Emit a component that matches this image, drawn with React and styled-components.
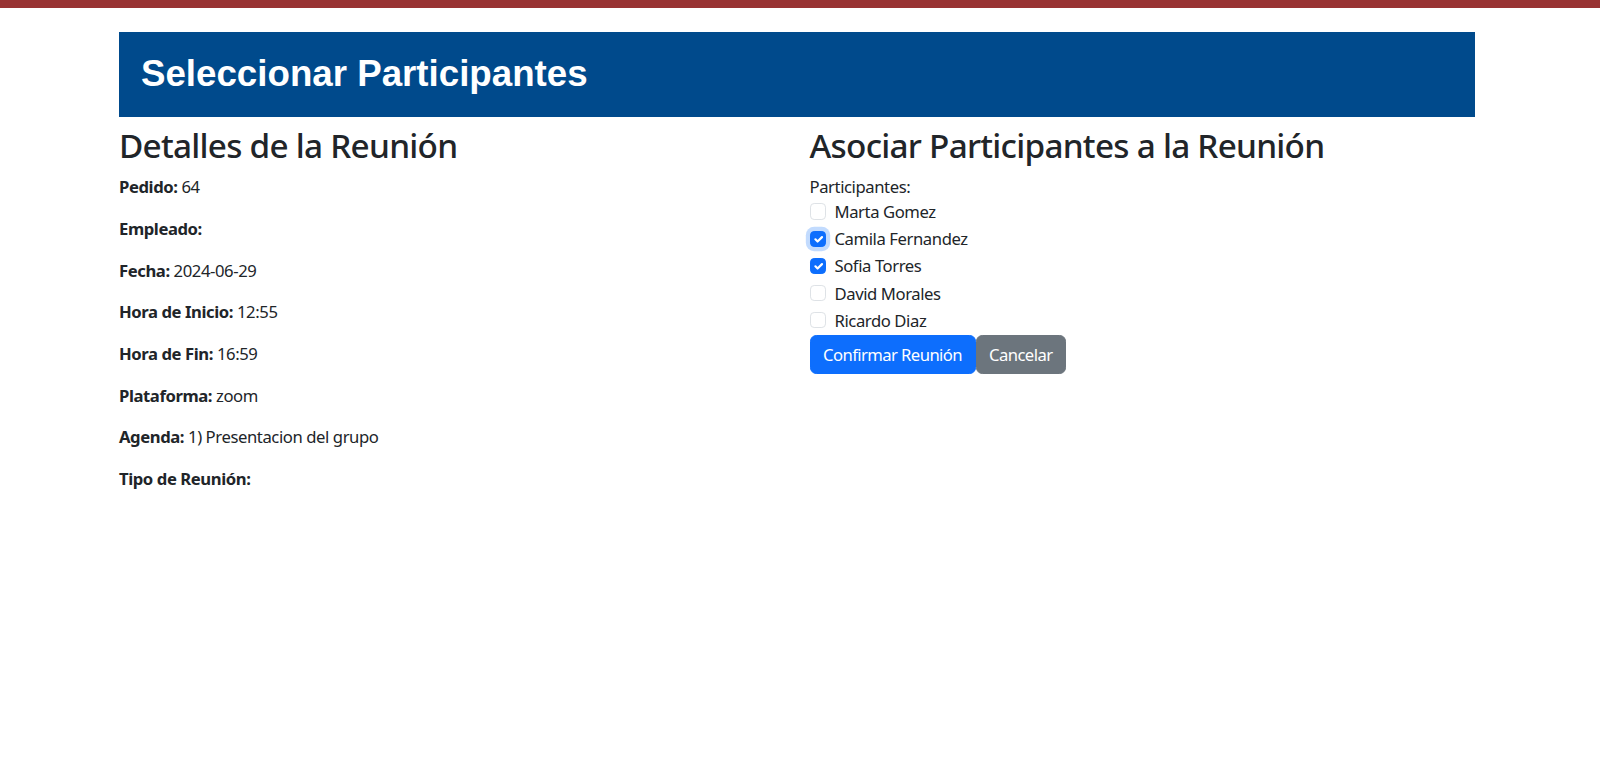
import React, { useState } from 'react'
import styled, { createGlobalStyle } from 'styled-components'

const GlobalStyle = createGlobalStyle`
  body {
    margin: 0;
    font-family: "Noto Sans", "Open Sans", sans-serif;
    font-size: 16.67px;
    line-height: 1.5;
    letter-spacing: -0.025em;
    color: #212529;
    background: #fff;
  }
  * {
    box-sizing: border-box;
  }
`

const detalles = [
  ['Pedido:', '64'],
  ['Empleado:', ''],
  ['Fecha:', '2024-06-29'],
  ['Hora de Inicio:', '12:55'],
  ['Hora de Fin:', '16:59'],
  ['Plataforma:', 'zoom'],
  ['Agenda:', '1) Presentacion del grupo'],
  ['Tipo de Reunión:', ''],
]

const participantesIniciales = [
  { id: 1, nombre: 'Marta Gomez', checked: false },
  { id: 2, nombre: 'Camila Fernandez', checked: true },
  { id: 3, nombre: 'Sofia Torres', checked: true },
  { id: 4, nombre: 'David Morales', checked: false },
  { id: 5, nombre: 'Ricardo Diaz', checked: false },
]

const App = () => {
  const [participantes, setParticipantes] = useState(participantesIniciales)
  const [focused, setFocused] = useState(2)

  const toggle = (id) => {
    setFocused(id)
    setParticipantes((prev) =>
      prev.map((p) => (p.id === id ? { ...p, checked: !p.checked } : p))
    )
  }

  return (
    <>
      <GlobalStyle />
      <TopBarStyled />
      <ContainerStyled>
        <HeaderStyled>
          <TitleStyled>Seleccionar Participantes</TitleStyled>
        </HeaderStyled>
        <ColumnsStyled>
          <section>
            <SectionTitleStyled>Detalles de la Reunión</SectionTitleStyled>
            {detalles.map(([label, value]) => (
              <DetailStyled key={label}>
                <strong>{label}</strong> {value}
              </DetailStyled>
            ))}
          </section>
          <section>
            <SectionTitleStyled>Asociar Participantes a la Reunión</SectionTitleStyled>
            <FieldLabelStyled>Participantes:</FieldLabelStyled>
            {participantes.map((p) => (
              <CheckRowStyled key={p.id} onClick={() => toggle(p.id)}>
                <CheckBoxStyled $checked={p.checked} $focused={focused === p.id}>
                  {p.checked && (
                    <svg viewBox="0 0 20 20" width="100%" height="100%">
                      <path
                        d="M6 10l3 3l6-6"
                        fill="none"
                        stroke="#fff"
                        strokeWidth="3"
                        strokeLinecap="round"
                        strokeLinejoin="round"
                      />
                    </svg>
                  )}
                </CheckBoxStyled>
                <span>{p.nombre}</span>
              </CheckRowStyled>
            ))}
            <ButtonsStyled>
              <ButtonStyled $variant="primary">Confirmar Reunión</ButtonStyled>
              <ButtonStyled $variant="secondary">Cancelar</ButtonStyled>
            </ButtonsStyled>
          </section>
        </ColumnsStyled>
      </ContainerStyled>
    </>
  )
}

const TopBarStyled = styled.div`
  height: 8px;
  background-color: #993333;
`

const ContainerStyled = styled.div`
  width: 1356px;
  margin: 24px 0 0 119px;
`

const HeaderStyled = styled.header`
  height: 85px;
  display: flex;
  align-items: center;
  padding: 0 22px;
  background-color: #004a8c;
`

const TitleStyled = styled.h1`
  margin: 0;
  font-family: "Liberation Sans", Arial, sans-serif;
  font-size: 36.7px;
  font-weight: 700;
  line-height: 1.2;
  letter-spacing: 0;
  color: #fff;
`

const ColumnsStyled = styled.div`
  display: grid;
  grid-template-columns: 1fr 1fr;
  column-gap: 25px;
  margin-top: 9px;
`

const SectionTitleStyled = styled.h2`
  margin: 0 0 8.33px;
  font-size: 33.3px;
  font-weight: 500;
  line-height: 1.2;
  letter-spacing: -0.022em;
`

const DetailStyled = styled.p`
  margin: 0 0 16.67px;

  strong {
    font-weight: 700;
  }
`

const FieldLabelStyled = styled.label`
  display: block;
`

const CheckRowStyled = styled.div`
  display: flex;
  align-items: flex-start;
  min-height: 25px;
  margin-bottom: 2.08px;
  cursor: pointer;
`

const CheckBoxStyled = styled.span`
  flex: none;
  width: 16.67px;
  height: 16.67px;
  margin: 4.17px 8.33px 0 0;
  display: flex;
  border: 1px solid ${(p) => (p.$checked ? '#0d6efd' : '#dee2e6')};
  border-radius: 4.17px;
  background-color: ${(p) => (p.$checked ? '#0d6efd' : '#fff')};
  box-shadow: ${(p) => (p.$focused ? '0 0 0 4.17px rgba(13, 110, 253, 0.25)' : 'none')};
`

const ButtonsStyled = styled.div`
  display: flex;
  gap: 0;
`

const ButtonStyled = styled.button`
  padding: 6.25px 12.5px;
  font-family: inherit;
  font-size: 16.67px;
  line-height: 1.5;
  letter-spacing: -0.035em;
  color: #fff;
  border: 1px solid ${(p) => (p.$variant === 'primary' ? '#0d6efd' : '#6c757d')};
  border-radius: 6.25px;
  background-color: ${(p) => (p.$variant === 'primary' ? '#0d6efd' : '#6c757d')};
  cursor: pointer;
`

export default App
